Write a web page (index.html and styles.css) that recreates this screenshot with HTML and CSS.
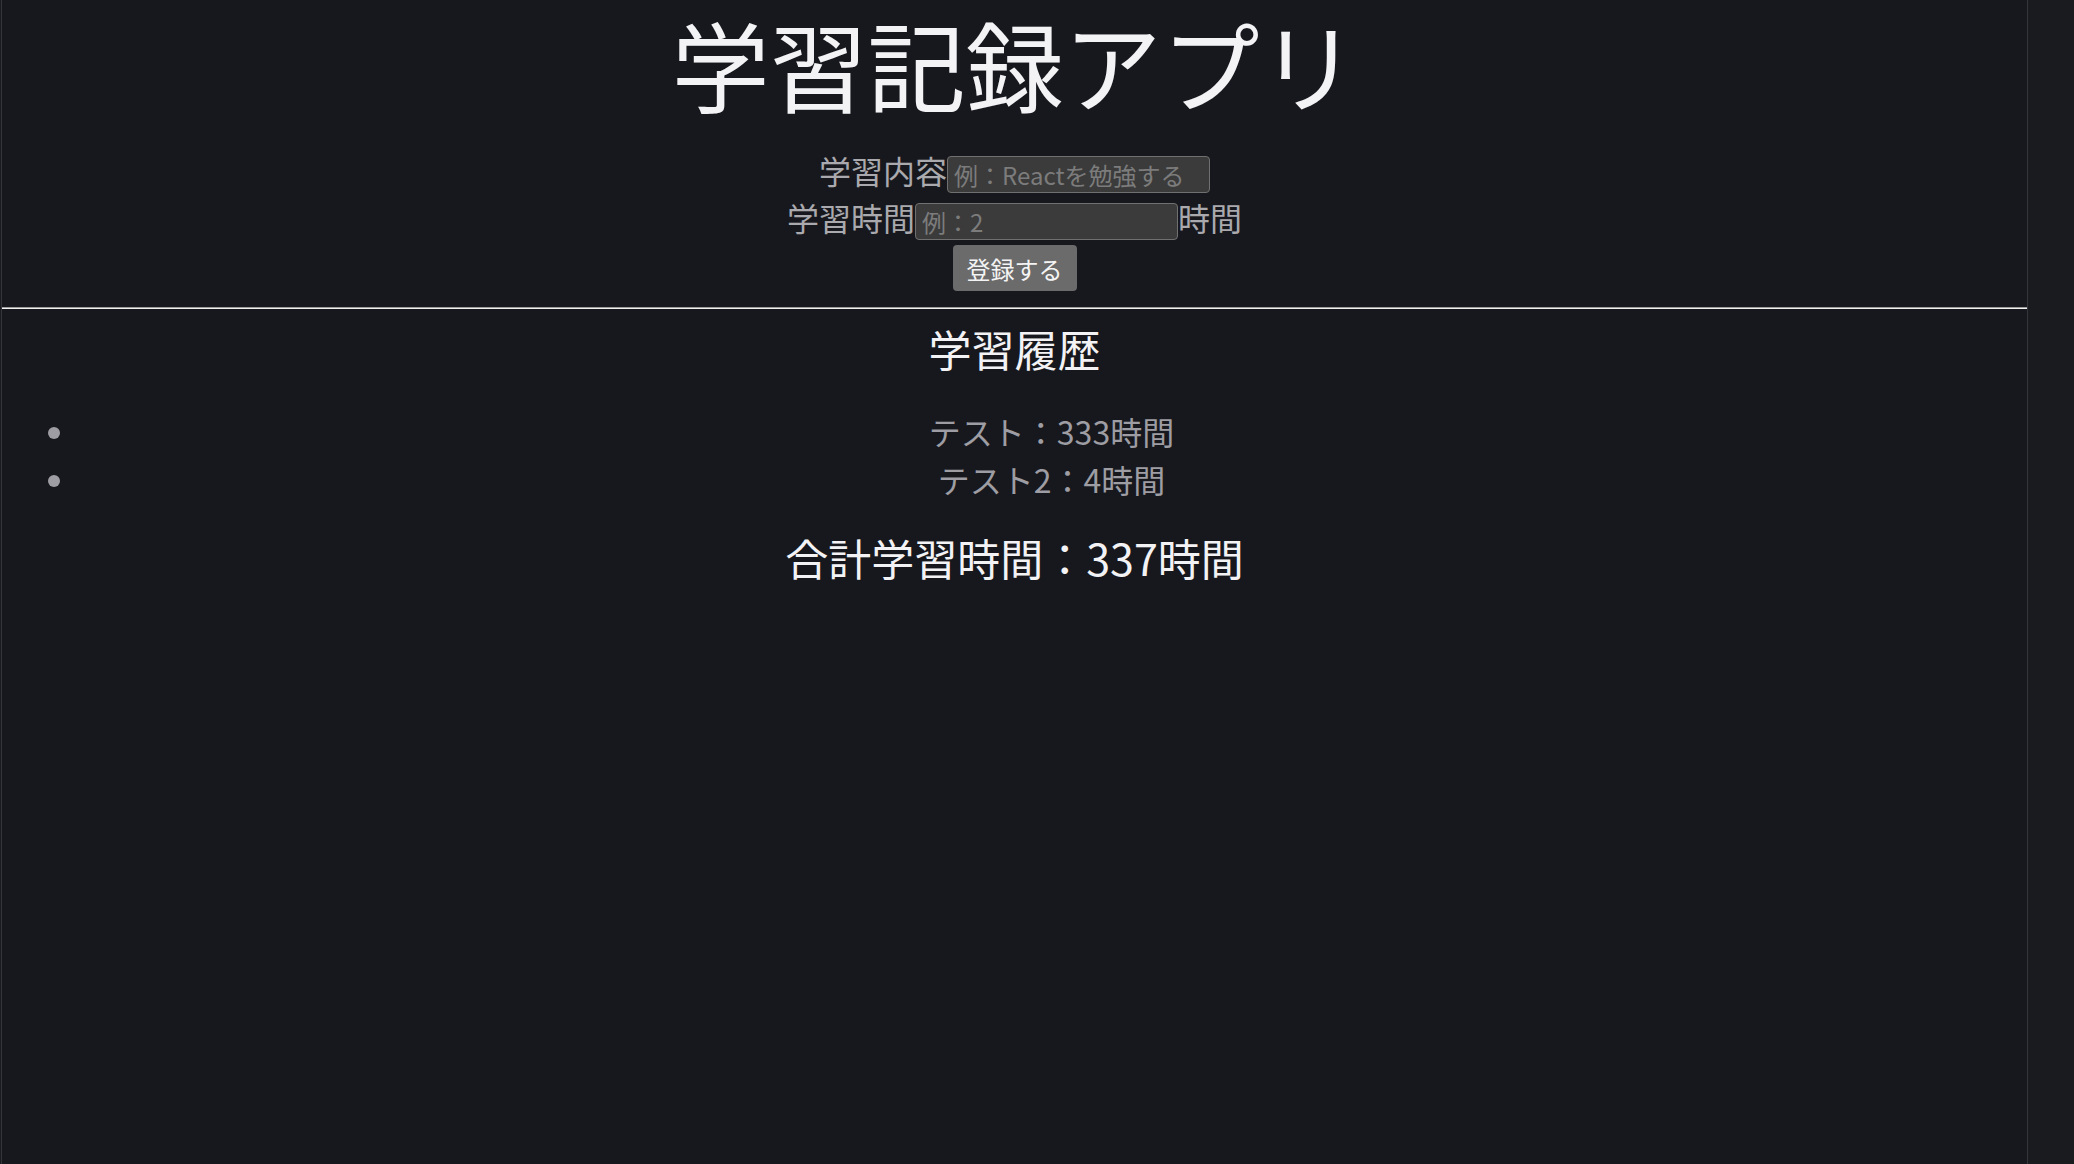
FILE: index.html
```html
<!DOCTYPE html>
<html lang="ja">
<head>
<meta charset="utf-8">
<title>学習記録アプリ</title>
<link rel="stylesheet" href="styles.css">
</head>
<body>
<div class="screen">
  <main class="page">
    <h1 class="title">学習記録アプリ</h1>
    <div class="form">
      <div class="row">
        <label class="label" for="content">学習内容</label>
        <input class="field" id="content" type="text" placeholder="例：Reactを勉強する">
      </div>
      <div class="row">
        <label class="label" for="time">学習時間</label>
        <input class="field" id="time" type="text" placeholder="例：2">
        <span class="label">時間</span>
      </div>
      <button class="submit" type="button">登録する</button>
    </div>
    <hr class="divider">
    <h2 class="heading">学習履歴</h2>
    <ul class="records">
      <li class="record">テスト：333時間</li>
      <li class="record">テスト2：4時間</li>
    </ul>
    <h3 class="total">合計学習時間：337時間</h3>
  </main>
  <div class="side"></div>
</div>
</body>
</html>
```

FILE: styles.css
```css
html, body {
  margin: 0;
  padding: 0;
  background: #1a1b1f;
}

body {
  font-family: "Noto Sans CJK JP", "Noto Sans", sans-serif;
  color: #a7a7ad;
}

.screen {
  display: flex;
  min-height: 100vh;
}

.page {
  width: 2025px;
  margin-left: 1px;
  border-left: 1px solid #34353a;
  border-right: 1px solid #34353a;
  background: #17181d;
  text-align: center;
  min-height: 1164px;
}

.side {
  flex: 1;
  background: #1a1b1f;
}

.title {
  margin: 0;
  padding-top: 1px;
  font-size: 98px;
  line-height: 122px;
  font-weight: 400;
  color: #f3f3f5;
}

.form {
  margin-top: 28px;
  display: flex;
  flex-direction: column;
  align-items: center;
}

.row {
  height: 47px;
  display: flex;
  justify-content: center;
  align-items: center;
}

.label {
  font-size: 32px;
  line-height: 47px;
  color: #a9a9ae;
  margin-bottom: 9px;
}

.field {
  box-sizing: border-box;
  width: 263px;
  height: 37px;
  margin: 0;
  padding: 0 6px;
  background: #3b3b3b;
  border: 1px solid #707070;
  border-radius: 4px;
  font-family: "Noto Sans CJK JP", "Noto Sans", sans-serif;
  font-size: 24px;
  color: #e0e0e0;
  outline: none;
}

.field::placeholder {
  color: #7c7c7c;
}

.submit {
  width: 124px;
  height: 46px;
  margin: 0;
  padding: 0;
  border: none;
  border-radius: 4px;
  background: #6b6b6b;
  color: #f4f4f4;
  font-family: "Noto Sans CJK JP", "Noto Sans", sans-serif;
  font-size: 24px;
}

.divider {
  margin: 16px 0 0;
  height: 0;
  border: none;
  border-top: 1px solid #9c9c9c;
  border-bottom: 1px solid #f0f0f0;
}

.heading {
  margin: 13px 0 0;
  font-size: 43px;
  line-height: 52px;
  font-weight: 400;
  color: #f3f3f5;
}

.records {
  margin: 33px 0 0;
  padding-left: 77px;
}

.record {
  margin-right: 3px;
  font-size: 32px;
  line-height: 48px;
  color: #9d9da3;
}

.total {
  margin: 28px 0 0;
  font-size: 43px;
  line-height: 52px;
  font-weight: 400;
  color: #f3f3f5;
}
```
